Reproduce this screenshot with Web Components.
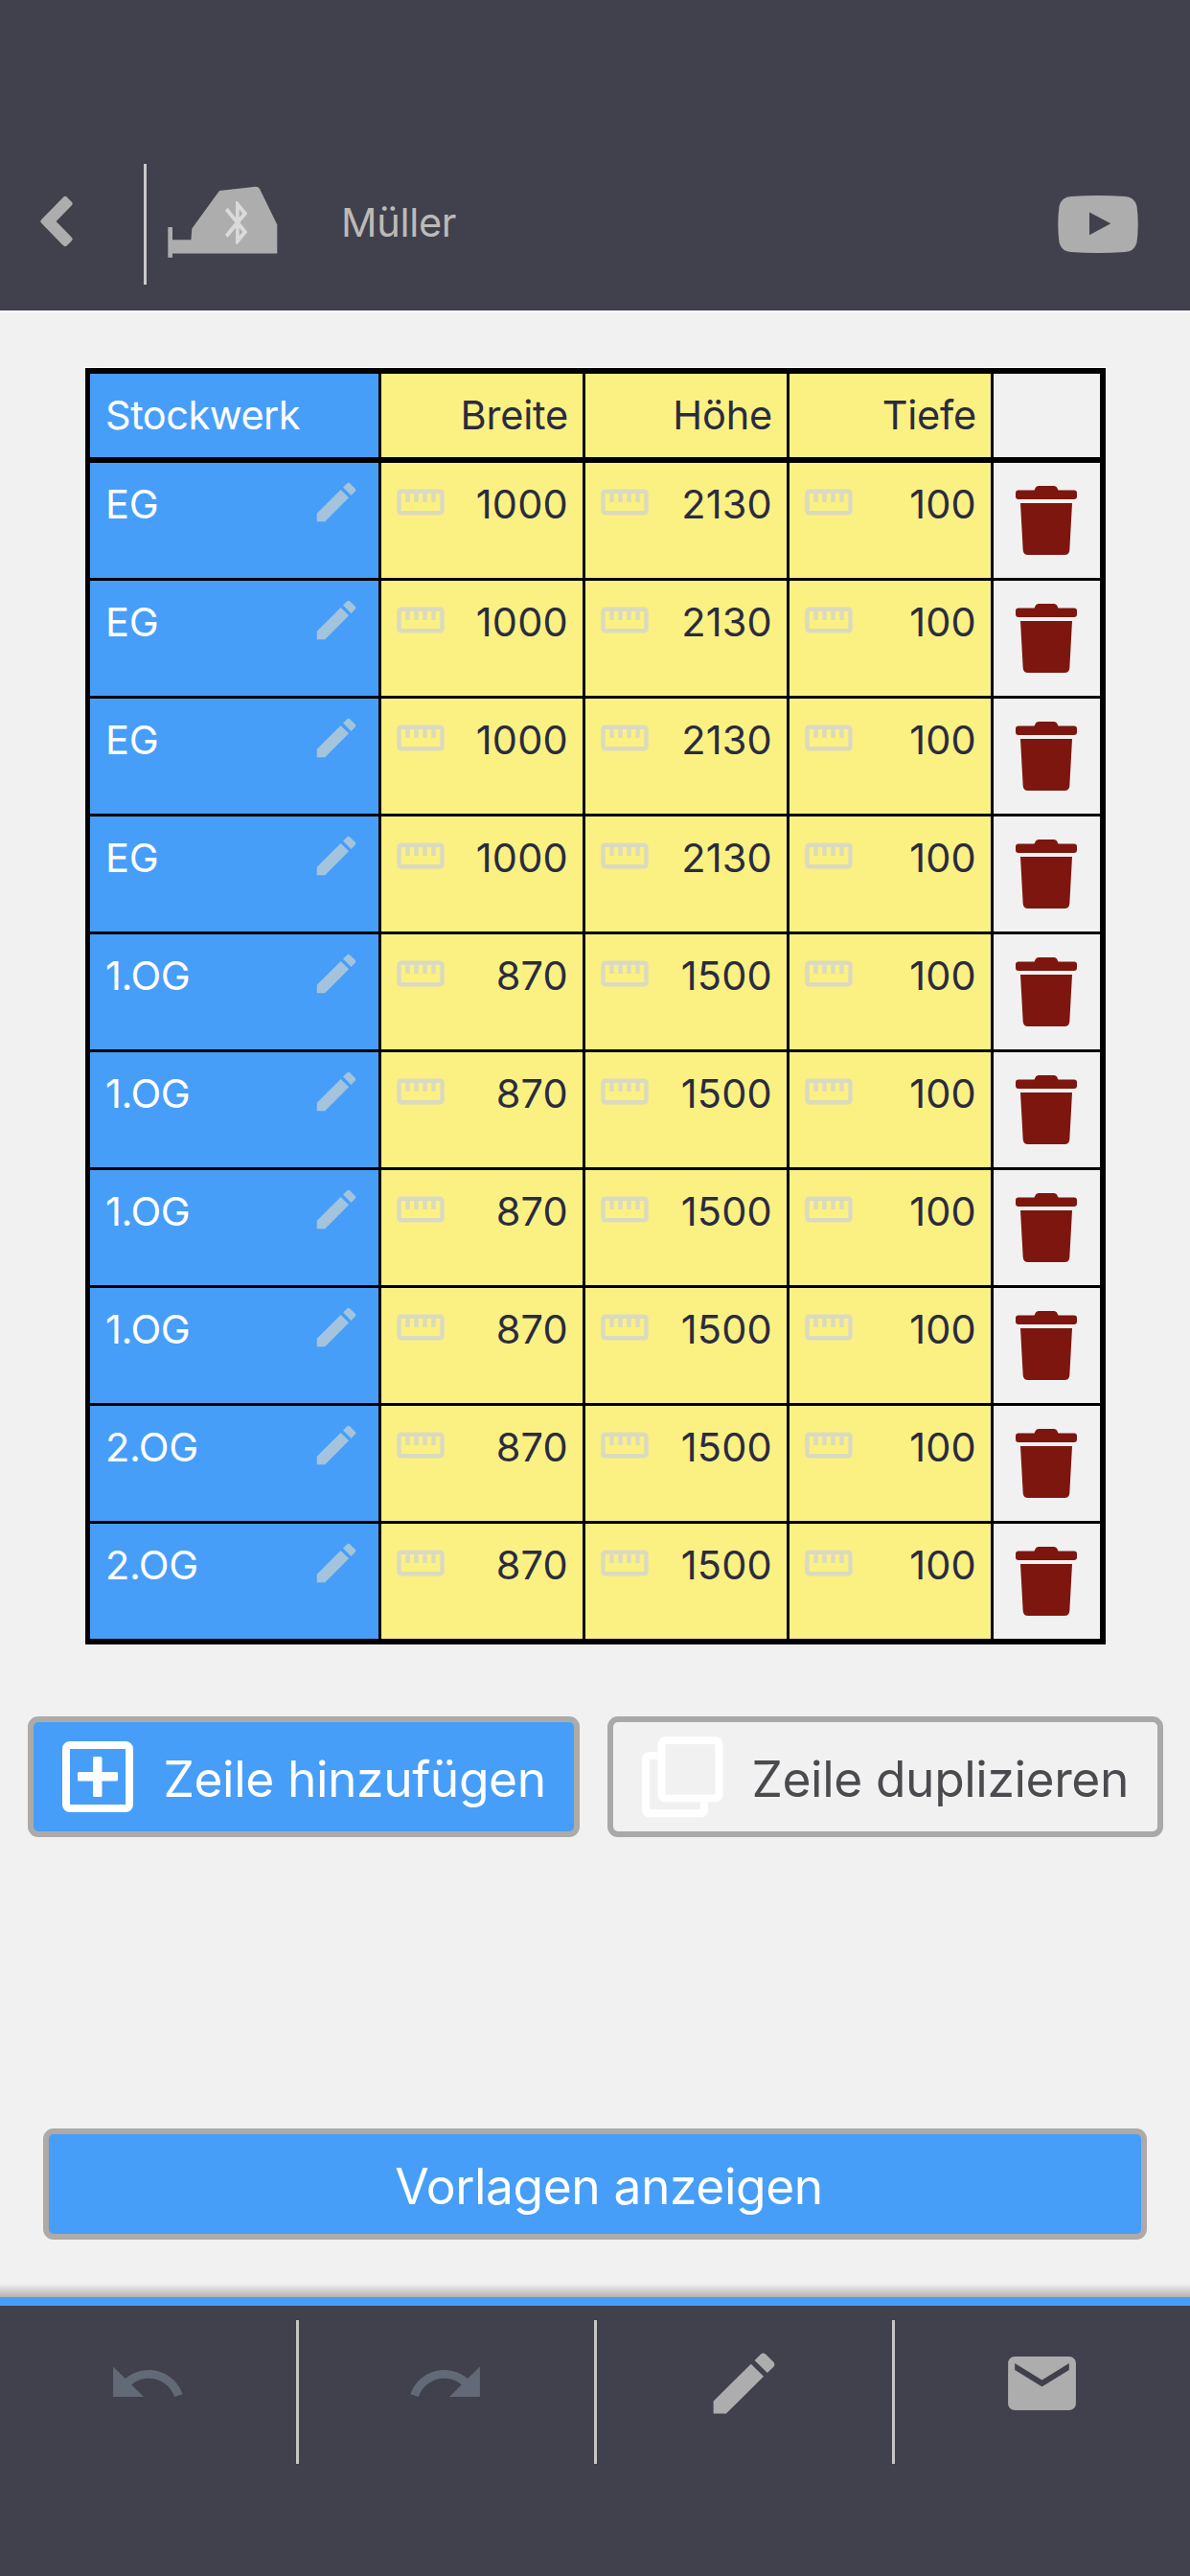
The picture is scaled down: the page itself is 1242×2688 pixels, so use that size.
<!DOCTYPE html>
<html lang="de">
<head>
<meta charset="utf-8">
<title>Müller</title>
<style>
  html, body {
    margin: 0;
    height: 100%;
    background: #f1f1f1;
    font-family: Inter, "Liberation Sans", sans-serif;
    font-weight: 400;
  }
</style>
</head>
<body>
<measure-app></measure-app>

<script>
const ICONS = {
  pencil: ['0 0 24 24', '<path d="M3 17.25V21h3.75L17.81 9.94l-3.75-3.75L3 17.25zM20.71 7.04c.39-.39.39-1.02 0-1.41l-2.34-2.34c-.39-.39-1.02-.39-1.41 0l-1.83 1.83 3.75 3.75 1.83-1.83z"/>'],
  ruler: ['0 0 24 24', '<path d="M21 6H3c-1.1 0-2 .9-2 2v8c0 1.1.9 2 2 2h18c1.1 0 2-.9 2-2V8c0-1.1-.9-2-2-2zm0 10H3V8h2v4h2V8h2v4h2V8h2v4h2V8h2v4h2V8h2v8z"/>'],
  undo: ['0 0 24 24', '<path d="M12.5 8c-2.65 0-5.05.99-6.9 2.6L2 7v9h9l-3.62-3.62c1.39-1.16 3.16-1.88 5.12-1.88 3.54 0 6.55 2.31 7.6 5.5l2.37-.78C21.08 11.03 17.15 8 12.5 8z"/>'],
  redo: ['0 0 24 24', '<path d="M18.4 10.6C16.55 8.99 14.15 8 11.5 8c-4.65 0-8.58 3.03-9.96 7.22L3.9 16c1.05-3.19 4.05-5.5 7.6-5.5 1.95 0 3.73.72 5.12 1.88L13 16h9V7l-3.6 3.6z"/>'],
  mail: ['0 0 24 24', '<path d="M20 4H4c-1.1 0-1.99.9-1.99 2L2 18c0 1.1.9 2 2 2h16c1.1 0 2-.9 2-2V6c0-1.1-.9-2-2-2zm0 4l-8 5-8-5V6l8 5 8-5v2z"/>'],
  trash: ['0 0 64 72', '<path d="M3 4.5H19.5L21 1.5Q22 0 24 0H40Q42 0 43 1.5L44.500 4.500H61Q64 4.500 64 7.500V11Q64 14 61 14H3Q0 14 0 11V7.500Q0 4.500 3 4.500ZM5 18H59L56.300 67Q56 72 51 72H13Q8 72 7.700 67Z"/>'],
  back: ['0 0 36 54', '<path d="M4.500 27L27 4L31.500 8.500L13.500 27L31.500 45.500L27 50Z" stroke="currentColor" stroke-width="6" stroke-linejoin="round"/>'],
  laser: ['0 0 115 76', '<path d="M.3 43H5V56.200H24.400L25.300 44.500L54 5L91.500.7Q94.500.5 96 3L114.300 40.600V70.600H5V74.700H.3Z"/><path fill="#dadada" transform="translate(50.800 11.500) scale(1.836 2.235)" d="M17.710 7.710L12 2h-1v7.590L6.410 5 5 6.410 10.590 12 5 17.590 6.410 19 11 14.410V22h1l5.710-5.710-4.300-4.290 4.300-4.290zM13 5.830l1.880 1.880L13 9.590V5.830zm1.880 10.460L13 18.170v-3.760l1.880 1.880z"/>'],
  video: ['0 0 84 60', '<path fill-rule="evenodd" d="M14 1Q42-.8 70 1Q80 1.500 82.500 11Q85 30 82.500 49Q80 58.500 70 59Q42 60.800 14 59Q4 58.500 1.500 49Q-1 30 1.500 11Q4 1.500 14 1ZM33 17.500V41.300L55.300 29.300Z"/>'],
  add: ['0 0 74 74', '<rect x="4" y="4" width="66" height="66" rx="4" fill="none" stroke="currentColor" stroke-width="8"/><rect x="16" y="32" width="42" height="9.500" rx="1.500"/><rect x="32" y="16" width="9.500" height="42" rx="1.500"/>'],
  copy: ['0 0 85 85', '<path fill="none" stroke="currentColor" stroke-width="8" d="M16.500 20H8Q4 20 4 24V76.300Q4 80.300 8 80.300H61Q65 80.300 65 76.300V68.500"/><rect x="20.500" y="4" width="60" height="60.500" rx="4" fill="none" stroke="currentColor" stroke-width="8"/>']
};

class AppIcon extends HTMLElement {
  constructor() {
    super();
    this.attachShadow({ mode: 'open' });
  }

  connectedCallback() {
    const [box, shape] = ICONS[this.getAttribute('name')];
    this.shadowRoot.innerHTML = `
      <style>
        :host {
          display: block;
          flex: none;
        }
        svg {
          display: block;
          width: 100%;
          height: 100%;
          fill: currentColor;
        }
      </style>
      <svg viewBox="${box}" preserveAspectRatio="none">${shape}</svg>
    `;
  }
}

class AppHeader extends HTMLElement {
  constructor() {
    super();
    this.attachShadow({ mode: 'open' });
    this.shadowRoot.innerHTML = `
      <style>
        :host {
          display: flex;
          align-items: flex-start;
          box-sizing: border-box;
          height: 326px;
          padding: 171px 54px 0 41px;
          background: #40414c;
          border-bottom: 2px solid #fff;
          color: #adadad;
        }
        .back {
          width: 36px;
          height: 54px;
          margin-top: 33px;
        }
        .line {
          width: 3px;
          height: 126px;
          margin-left: 73px;
          background: #cac9c8;
        }
        .laser {
          width: 115px;
          height: 76px;
          margin: 23px 0 0 22px;
        }
        .title {
          flex: 1;
          margin-left: 66px;
          font-size: 41.5px;
          line-height: 123px;
          color: #bcbab7;
          letter-spacing: -.3px;
        }
        .video {
          width: 84px;
          height: 60px;
          margin-top: 32.500px;
        }
      </style>
      <app-icon class="back" name="back"></app-icon>
      <div class="line"></div>
      <app-icon class="laser" name="laser"></app-icon>
      <div class="title"><slot></slot></div>
      <app-icon class="video" name="video"></app-icon>
    `;
  }
}

class MeasureRow extends HTMLElement {
  constructor() {
    super();
    this.attachShadow({ mode: 'open' });
  }

  connectedCallback() {
    const [floor, ...sizes] = this.getAttribute('values').split('|');
    const head = this.hasAttribute('head');
    const cells = sizes.map(size => `
      <div class="cell size">
        ${head ? '' : '<app-icon class="ruler" name="ruler"></app-icon>'}
        <span>${size}</span>
      </div>`).join('');

    this.shadowRoot.innerHTML = `
      <style>
        :host {
          display: grid;
          grid-template-columns: 301px 210px 210px 210px 111px;
          column-gap: 3px;
          height: 120px;
          font-size: 41.5px;
          line-height: 87px;
        }
        :host([head]) {
          height: 87px;
          margin-bottom: 3px;
        }
        .cell {
          display: flex;
          justify-content: space-between;
          align-items: flex-start;
        }
        .floor {
          padding: 0 17px 0 16px;
          background: #479ef8;
          color: #fff;
          letter-spacing: -.3px;
        }
        .size {
          padding: 0 15px 0 14px;
          background: #fbf182;
          color: #2a2b40;
          letter-spacing: .2px;
        }
        :host([head]) .floor {
          letter-spacing: -.5px;
        }
        :host([head]) .size {
          justify-content: flex-end;
          letter-spacing: -.2px;
        }
        .remove {
          padding-left: 23px;
          background: #f1f1f1;
          color: #7d160e;
        }
        .pencil {
          width: 54px;
          height: 54px;
          margin-top: 13.500px;
          color: #a3c4dc;
        }
        .ruler {
          width: 54px;
          height: 54px;
          margin-top: 13.500px;
          color: #dbdabf;
        }
        .trash {
          width: 64px;
          height: 72px;
          margin-top: 24px;
        }
      </style>
      <div class="cell floor">
        <span>${floor}</span>
        ${head ? '' : '<app-icon class="pencil" name="pencil"></app-icon>'}
      </div>
      ${cells}
      <div class="cell remove">${head ? '' : '<app-icon class="trash" name="trash"></app-icon>'}</div>
    `;
  }
}

class MeasureTable extends HTMLElement {
  constructor() {
    super();
    this.attachShadow({ mode: 'open' });
    this.shadowRoot.innerHTML = `
      <style>
        :host {
          display: flex;
          flex-direction: column;
          gap: 3px;
          border: 6px solid #000;
          border-left-width: 5px;
          background: #000;
          box-shadow: 0 0 0 1px #fcfcfc;
        }
      </style>
      <slot></slot>
    `;
  }
}

class ActionButton extends HTMLElement {
  constructor() {
    super();
    this.attachShadow({ mode: 'open' });
    this.shadowRoot.innerHTML = `
      <style>
        :host {
          display: flex;
          align-items: center;
          box-sizing: border-box;
          height: 126px;
          border: 6px solid #adaaa8;
          border-radius: 11px;
          background: #479ef8;
          color: #fff;
          font-size: 51.5px;
          letter-spacing: -.4px;
          white-space: nowrap;
        }
        :host([plain]) {
          border-color: #a9a9a9;
          background: #f1f1f1;
        }
        .label {
          padding-top: 3px;
        }
        :host([plain]) .label {
          color: #4b4b4f;
        }
      </style>
      <slot name="icon"></slot>
      <span class="label"><slot></slot></span>
    `;
  }
}

class ToolBar extends HTMLElement {
  constructor() {
    super();
    this.attachShadow({ mode: 'open' });
    this.shadowRoot.innerHTML = `
      <style>
        :host {
          display: block;
          color: #adadad;
        }
        .shade {
          height: 14px;
          background: linear-gradient(#f1f1f1, #d2d1d0 50%, #b4b0ac);
        }
        .bar {
          display: grid;
          grid-template-columns: 309px 3px 308px 3px 308px 3px 308px;
          justify-items: center;
          height: 282px;
          border-top: 9px solid #459efc;
          background: #40414c;
        }
        .line {
          width: 3px;
          height: 150px;
          margin-top: 15px;
          background: #c8c6c4;
        }
        app-icon {
          width: 85px;
          height: 84px;
          margin: 38.500px 2px 0 0;
        }
        .off {
          color: #616a76;
        }
      </style>
      <div class="shade"></div>
      <div class="bar">
        <app-icon class="off" name="undo"></app-icon>
        <div class="line"></div>
        <app-icon class="off" name="redo"></app-icon>
        <div class="line"></div>
        <app-icon name="pencil"></app-icon>
        <div class="line"></div>
        <app-icon name="mail"></app-icon>
      </div>
    `;
  }
}

class MeasureApp extends HTMLElement {
  constructor() {
    super();
    this.attachShadow({ mode: 'open' });
    const rows = [
      ...Array(4).fill('EG|1000|2130|100'),
      ...Array(4).fill('1.OG|870|1500|100'),
      ...Array(2).fill('2.OG|870|1500|100')
    ];

    this.shadowRoot.innerHTML = `
      <style>
        :host {
          display: flex;
          flex-direction: column;
          width: 1242px;
          height: 2688px;
          background: #f1f1f1;
        }
        measure-table {
          margin: 58px 88px 0 89px;
        }
        .actions {
          display: grid;
          grid-template-columns: 576px 580px;
          gap: 29px;
          margin: 75px 0 0 28.500px;
        }
        .add {
          width: 74px;
          height: 74px;
          margin: 0 32px 0 30px;
        }
        .copy {
          width: 85px;
          height: 85px;
          margin: 0 30px 0 30px;
          color: #fff;
        }
        .templates {
          height: 116px;
          margin: 304px 45px 0;
          justify-content: center;
          padding-left: 29px;
        }
        tool-bar {
          margin-top: auto;
        }
      </style>
      <app-header>Müller</app-header>
      <measure-table>
        <measure-row head values="Stockwerk|Breite|Höhe|Tiefe"></measure-row>
        ${rows.map(row => `<measure-row values="${row}"></measure-row>`).join('')}
      </measure-table>
      <div class="actions">
        <action-button>
          <app-icon slot="icon" class="add" name="add"></app-icon>Zeile hinzufügen
        </action-button>
        <action-button plain>
          <app-icon slot="icon" class="copy" name="copy"></app-icon>Zeile duplizieren
        </action-button>
      </div>
      <action-button class="templates">Vorlagen anzeigen</action-button>
      <tool-bar></tool-bar>
    `;
  }
}

customElements.define('app-icon', AppIcon);
customElements.define('app-header', AppHeader);
customElements.define('measure-row', MeasureRow);
customElements.define('measure-table', MeasureTable);
customElements.define('action-button', ActionButton);
customElements.define('tool-bar', ToolBar);
customElements.define('measure-app', MeasureApp);
</script>
</body>
</html>
